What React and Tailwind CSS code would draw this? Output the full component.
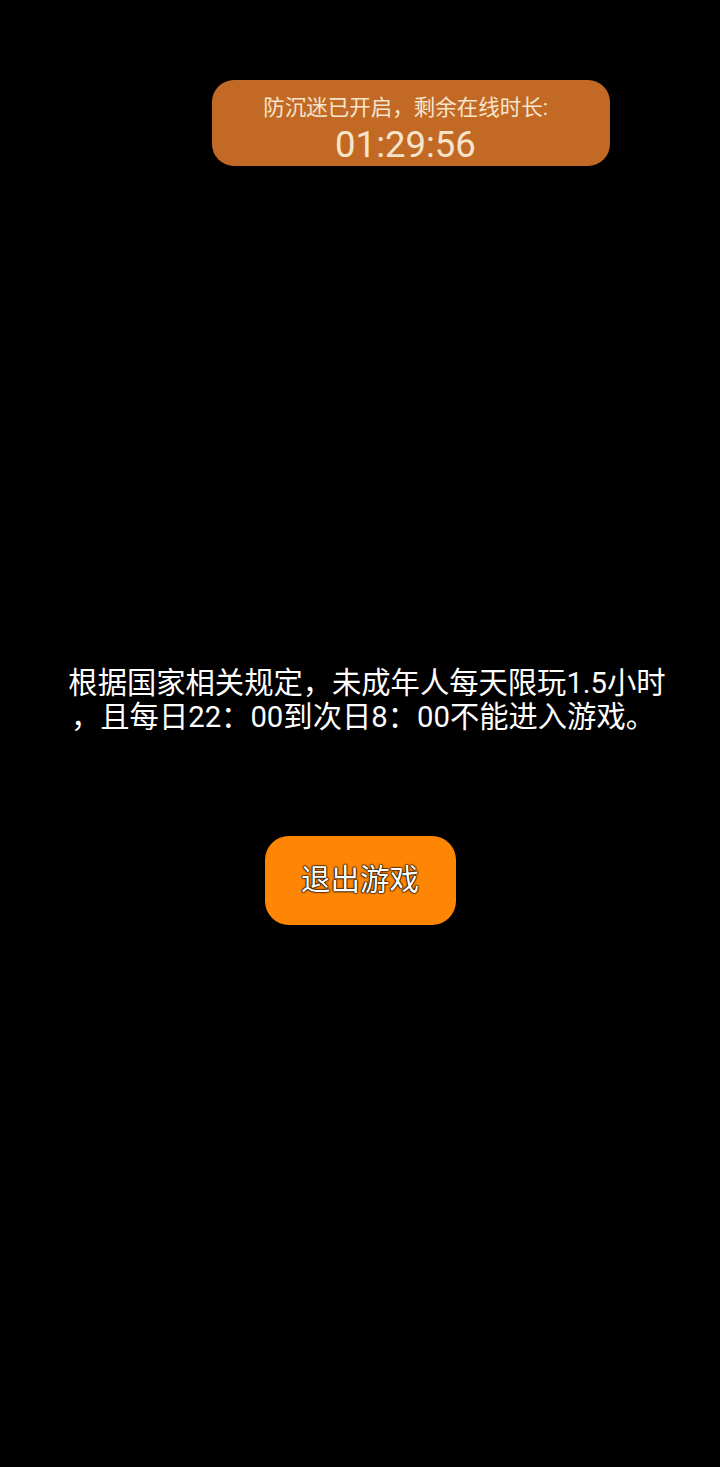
export default function App() {
  const font = { fontFamily: 'Roboto, "Noto Sans CJK SC", sans-serif' };
  return (
    <div className="w-[720px] h-[1467px] bg-black flex flex-col items-center" style={font}>
      <div className="mt-[80px] ml-[102px] w-[398px] h-[86px] bg-[#c26a25] rounded-[22px] flex flex-col items-center pt-[14px] pr-[11px] text-[#f6e4cc]">
        <div className="text-[21.5px] leading-[28px]">防沉迷已开启，剩余在线时长:</div>
        <div className="text-[36.5px] leading-[42px] mt-[2px]">01:29:56</div>
      </div>
      <div className="mt-[500px] text-white text-[29.3px] leading-[34px] text-center">
        <div className="ml-[14px]">根据国家相关规定，未成年人每天限玩1.5小时</div>
        <div className="ml-[6px]">，且每日22：00到次日8：00不能进入游戏。</div>
      </div>
      <div className="mt-[102px] w-[191px] h-[89px] bg-[#ff8605] rounded-[24px] flex items-center justify-center">
        <span className="text-white text-[29.5px] [text-shadow:0_0_2px_#000,0_0_2px_#000,0_0_1px_#000,0_0_1px_#000]">退出游戏</span>
      </div>
    </div>
  );
}
